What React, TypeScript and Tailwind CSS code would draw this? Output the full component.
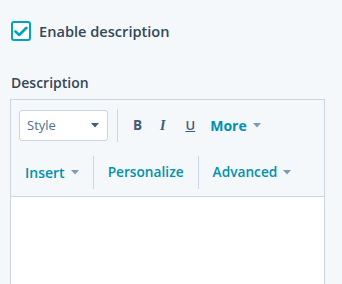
import React from "react";

const Caret = () => (
  <svg width="8" height="5" viewBox="0 0 8 5" className="ml-[6px]">
    <path d="M0 0 L8 0 L4 4.5 Z" fill="#7c98b6" />
  </svg>
);

export default function App() {
  return (
    <div className="w-[342px] h-[284px] overflow-hidden bg-[#f5f8fa] text-[#33475b]" style={{ fontFamily: '"Open Sans", "Liberation Sans", sans-serif' }}>
      <div className="pl-[11px] pt-[20px] flex items-center">
        <div className="w-[20px] h-[20px] rounded-[3px] border-2 border-[#00a4bd] bg-white flex items-center justify-center">
          <svg width="14" height="11" viewBox="0 0 14 11">
            <path d="M1.5 5.5 L5.2 9 L12.5 1.8" fill="none" stroke="#00a4bd" strokeWidth="2.6" strokeLinecap="round" strokeLinejoin="round" />
          </svg>
        </div>
        <span className="ml-[8px] text-[14.6px] font-semibold leading-[22px]">Enable description</span>
      </div>
      <div className="pl-[11px] mt-[32px] text-[14px] font-semibold leading-[18px]">Description</div>
      <div className="ml-[10px] mt-[7px] w-[315px] border border-[#cbd6e2] border-b-0">
        <div className="bg-[#f5f8fa] border-b border-[#cbd6e2]">
          <div className="flex items-center h-[50px] pl-[8px] pt-[1px]">
            <div className="w-[89px] h-[31px] bg-white border border-[#cbd6e2] rounded-[3px] flex items-center justify-between pl-[7px] pr-[8px]">
              <span className="text-[13px] text-[#516f90]">Style</span>
              <svg width="8" height="5" viewBox="0 0 8 5"><path d="M0 0 L8 0 L4 4.5 Z" fill="#425b76" /></svg>
            </div>
            <div className="w-px h-[33px] bg-[#cbd6e2] ml-[9px]" />
            <span className="ml-[15px] text-[13.5px] font-bold text-[#425b76]">B</span>
            <span className="ml-[18px] text-[14px] italic font-semibold text-[#425b76]" style={{ fontFamily: '"Liberation Serif", serif' }}>I</span>
            <span className="ml-[20px] text-[13px] underline font-semibold text-[#425b76]">U</span>
            <span className="ml-[15px] text-[14px] font-bold text-[#0091ae] flex items-center">More<Caret /></span>
          </div>
          <div className="flex items-center h-[46px] pb-[1px]">
            <span className="pl-[14px] pr-[14px] text-[14px] font-semibold text-[#0091ae] flex items-center">Insert<Caret /></span>
            <div className="w-px h-[33px] bg-[#cbd6e2]" />
            <span className="px-[14px] text-[13.7px] font-semibold text-[#0091ae]">Personalize</span>
            <div className="w-px h-[33px] bg-[#cbd6e2]" />
            <span className="px-[14px] text-[13.7px] font-semibold text-[#0091ae] flex items-center">Advanced<Caret /></span>
          </div>
        </div>
        <div className="bg-white h-[100px]" />
      </div>
    </div>
  );
}
